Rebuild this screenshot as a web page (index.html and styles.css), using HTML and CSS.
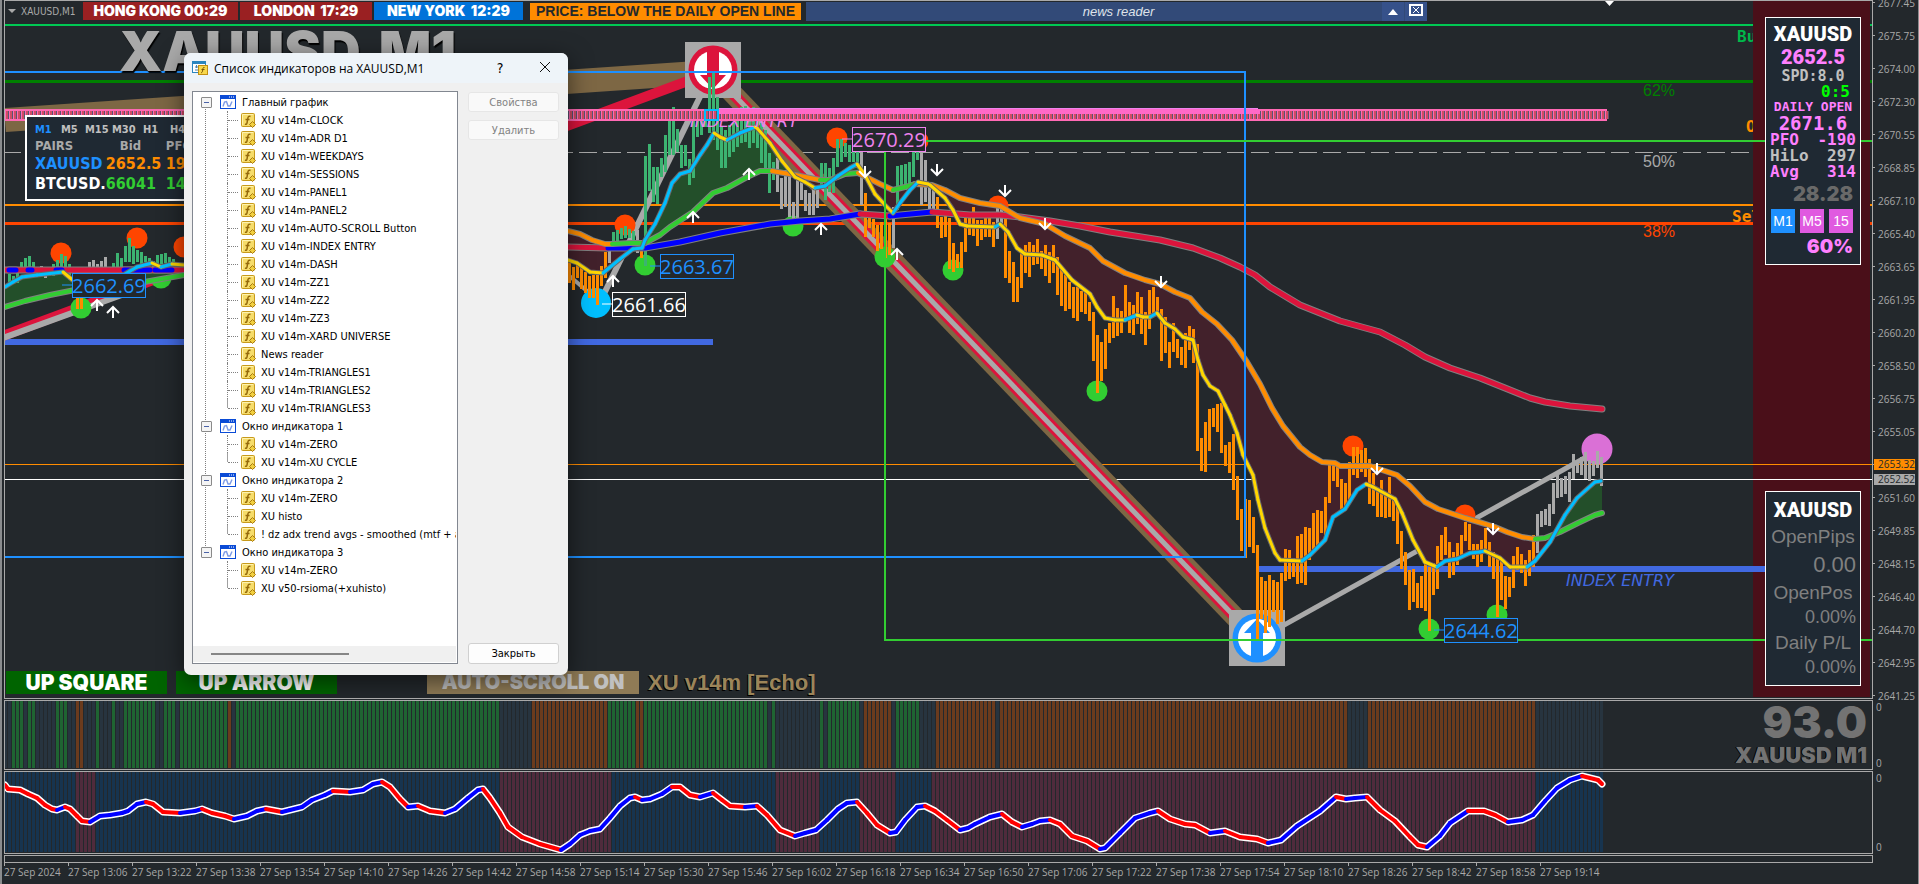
FILE: index.html
```html
<!DOCTYPE html>
<html lang="ru">
<head>
<meta charset="utf-8">
<title>XAUUSD,M1</title>
<meta name="viewport" content="width=device-width, initial-scale=1">
<link rel="stylesheet" href="styles.css">
</head>
<body>

<!-- shared icons -->
<svg class="defs" width="0" height="0">
	<symbol id="ico-chart" viewBox="0 0 16 14">
		<rect x="0.5" y="0.5" width="15" height="13" fill="#fff" stroke="#0a4bd6"/>
		<rect width="16" height="4" fill="#0a4bd6"/>
		<path d="M9 2h1M11 2h1M13 2h1" stroke="#fff"/>
		<path d="M3 11.500L4.500 7L6.500 6.500L8 11L10 11L12 6.500" fill="none" stroke="#7d9be6" stroke-width="1.400"/>
	</symbol>
	<symbol id="ico-func" viewBox="0 0 15 15">
		<rect x="0.500" y="0.500" width="13" height="13" rx="1" fill="#f6dc6a" stroke="#c79a1c"/>
		<path d="M1.500 12V1.500H12" fill="none" stroke="#fff3b0"/>
		<path d="M9.500 3.500C7.500 2.500 7 4 6.700 6L6 10C5.800 11.500 5 11.500 4 11M4.500 6.500H8.500" fill="none" stroke="#94690a" stroke-width="1.500"/>
		<path d="M11.500 8.500L14.500 11.500L11.500 14.500L8.500 11.500Z" fill="#f1cf3f" stroke="#a87a10"/>
	</symbol>
</svg>

<div class="terminal">
	<main class="pane price" id="price">
		<svg class="plot" id="chart"></svg>

		<div class="layer">
			<div class="topbar">
				<span class="symbol"><i class="tri"></i>XAUUSD,M1</span>
				<div class="clocks">
					<span class="clock c_hk">HONG KONG 00:29</span>
					<span class="clock c_ln">LONDON&nbsp; 17:29</span>
					<span class="clock c_ny">NEW YORK&nbsp; 12:29</span>
				</div>
				<span class="warn">PRICE: BELOW THE DAILY OPEN LINE</span>
				<div class="news">
					<em>news reader</em>
					<button type="button" aria-label="Collapse"><svg width="10" height="6"><path d="M0 6L5 0L10 6Z" fill="#fff"/></svg></button>
					<button type="button" aria-label="Close"><svg width="14" height="12"><rect x="1" y="1" width="12" height="10" fill="none" stroke="#fff" stroke-width="2"/><path d="M4 3L10 9M10 3L4 9" stroke="#fff"/></svg></button>
				</div>
			</div>
			<div class="watermark">XAUUSD,M1</div>
			<div class="bottombar">
				<button type="button" class="tag">UP SQUARE</button>
				<button type="button" class="tag">UP ARROW</button>
				<button type="button" class="tag tan">AUTO-SCROLL ON</button>
				<span class="version">XU v14m [Echo]</span>
			</div>
		</div>

		<section class="dash">
			<div class="tfs"><b>M1</b><span>M5</span><span>M15</span><span>M30</span><span>H1</span><span>H4</span></div>
			<table>
				<tr class="head"><th>PAIRS</th><th class="bid">Bid</th><th>PFO</th></tr>
				<tr><td class="blue">XAUUSD</td><td class="orange">2652.5</td><td class="orange">190</td></tr>
				<tr><td class="white">BTCUSD.</td><td class="green">66041</td><td class="green">141</td></tr>
			</table>
		</section>

		<div class="side">
			<section class="box info">
				<h2>XAUUSD</h2>
				<p class="big">2652.5</p>
				<p class="spd">SPD:8.0</p>
				<p class="timer">0:5</p>
				<p class="open">DAILY OPEN</p>
				<p class="openval">2671.6</p>
				<p class="pair"><span>PFO</span><span>-190</span></p>
				<p class="pair grey"><span>HiLo</span><span>297</span></p>
				<p class="pair"><span>Avg</span><span>314</span></p>
				<p class="ratio">28.28</p>
				<div class="tfbtns">
					<button type="button" class="on">M1</button>
					<button type="button">M5</button>
					<button type="button">15</button>
				</div>
				<p class="pct">60%</p>
			</section>
			<section class="box pl">
				<h2>XAUUSD</h2>
				<p>OpenPips</p>
				<p class="num n1">0.00</p>
				<p>OpenPos</p>
				<p class="num">0.00%</p>
				<p>Daily P/L</p>
				<p class="num">0.00%</p>
			</section>
		</div>

		<section class="dialog">
			<header>
				<svg width="16" height="14">
					<rect x="0.5" y="0.5" width="13" height="11" fill="#fff" stroke="#2b86bf"/>
					<rect width="14" height="3" fill="#2b86bf"/>
					<path d="M3 6H6M3 9H6M4.500 4V7" stroke="#4b7fa8"/>
					<rect x="6.500" y="4.500" width="9" height="9" fill="#f8d84c" stroke="#c28f12"/>
					<path d="M12.500 6.500C11 6 11 7 10.700 9C10.500 11 10 12 9 11.500M9.500 8.500H12.500" fill="none" stroke="#7a5605"/>
				</svg>
				<h1>Список индикаторов на XAUUSD,M1</h1>
				<button type="button" class="help">?</button>
				<button type="button" class="x" aria-label="Закрыть окно"><svg width="10" height="10"><path d="M0 0L10 10M10 0L0 10" stroke="#111"/></svg></button>
			</header>
			<div class="content">
				<div class="treebox">
					<ul class="tree" id="tree"></ul>
					<div class="hscroll"><i></i></div>
				</div>
				<div class="actions">
					<button type="button" disabled>Свойства</button>
					<button type="button" disabled>Удалить</button>
					<button type="button" class="close">Закрыть</button>
				</div>
			</div>
		</section>
	</main>
	<aside class="axis" id="axis">
		<span class="mark bid">2653.32</span>
		<span class="mark ask">2652.52</span>
	</aside>

	<section class="pane">
		<svg class="plot" id="cycle"></svg>
		<div class="score"><b>93.0</b><span>XAUUSD M1</span></div>
	</section>
	<aside class="axis sub"><span>0</span><span>0</span></aside>

	<section class="pane">
		<svg class="plot" id="osc"></svg>
	</section>
	<aside class="axis sub"><span>0</span><span>0</span></aside>

	<footer class="dates" id="dates"></footer>
</div>

<script src="chart.js"></script>
</body>
</html>
```
FILE: styles.css
```css
* { box-sizing: border-box; }
html, body { height: 100%; }
body {
	margin: 0;
	background: #23282c;
	color: #a9a9a9;
	font-family: "DejaVu Sans Condensed", "Open Sans", sans-serif;
	font-size: 11px;
	overflow: hidden;
}
h1, h2, p, ul { margin: 0; padding: 0; }
button { font: inherit; border: 0; padding: 0; }
.defs { position: absolute; }

.terminal {
	height: 100vh;
	border-left: 2px solid #8a8c8e;
	border-right: 1px solid #8a8c8e;
	padding-left: 2px;
	display: grid;
	grid-template-columns: minmax(0, 1fr) 45px;
	grid-template-rows: minmax(0, 1fr) 70px 83px 29px;
	row-gap: 1px;
}
.pane {
	position: relative;
	overflow: hidden;
	border: 1px solid #a9a9a9;
}
.plot { position: absolute; left: 0; top: 0; width: 100%; height: 100%; }

/* strip behind the right panels */
.band {
	x: calc(100% - 114px);
	y: 0;
	width: 117px;
	height: 100%;
	fill: #4a0f19;
}

.layer {
	position: relative;
	height: 100%;
	display: flex;
	flex-direction: column;
}
.topbar {
	display: flex;
	align-items: center;
	height: 20px;
}
.symbol { width: 78px; padding-left: 3px; font-size: 10px; white-space: nowrap; }
.tri {
	display: inline-block;
	margin-right: 5px;
	vertical-align: 2px;
	border: 4px solid transparent;
	border-top-color: #a9a9a9;
	border-bottom: 0;
}
.clocks { display: flex; gap: 2px; margin-right: 7px; }
.clock {
	height: 18px;
	text-align: center;
	font: 900 14px/18px Inter, "Liberation Sans", sans-serif;
	color: #fff;
	white-space: nowrap;
}
.c_hk { width: 155px; background: #9a2022; }
.c_ln { width: 132px; background: #9a2022; }
.c_ny { width: 149px; background: #0073d9; }
.warn {
	width: 271px;
	text-align: center;
	background: #ff8c00;
	color: #23282c;
	font: bold 14px/17px "Liberation Sans", sans-serif;
	white-space: nowrap;
	margin-right: 5px;
}
.news {
	display: flex;
	align-items: center;
	width: 621px;
	height: 19px;
	background: #324a78;
}
.news em { flex: 1; padding-left: 50px; text-align: center; font: italic 13px "Liberation Sans", sans-serif; color: #dfe3ea; }
.news button { width: 22px; height: 19px; margin-left: 1px; background: #36518a; line-height: 1; }
.watermark {
	margin: 2px 0 0 114px;
	font: 900 55px/56px Inter, sans-serif;
	color: #a9a9a9;
	text-shadow: 1px 2px 1px #000;
}
.bottombar {
	margin-top: auto;
	padding: 0 0 4px 1px;
	display: flex;
}
.tag {
	width: 161px;
	height: 23px;
	margin-right: 9px;
	background: #006400;
	color: #fff;
	font: 900 21px/23px Inter, sans-serif;
	white-space: nowrap;
}
.tan { width: 212px; margin-left: 81px; background: #8f7b56; color: #c0c0c0; font-size: 20px; }
.version {
	font: bold 22px/23px "Liberation Sans", sans-serif;
	color: #9c8559;
	text-shadow: -1px 1px 0 #000;
}

/* pair table, top left */
.dash {
	position: absolute;
	left: 20px;
	top: 114px;
	width: 210px;
	height: 86px;
	padding: 5px 8px;
	border: 2px solid #fff;
	background: #1f2933;
	font-family: "Liberation Sans Narrow", "DejaVu Sans Condensed", sans-serif;
	font-weight: bold;
}
.tfs { display: grid; grid-template-columns: 26px 24px 27px 31px 27px 30px; font-size: 11px; line-height: 16px; color: #c0c0c0; }
.tfs b, .blue { color: #1e90ff; }
.dash table { border-collapse: collapse; font-size: 16px; line-height: 20px; }
.dash td, .dash th { padding: 0; text-align: left; }
.dash td:nth-child(1) { width: 68px; }
.dash td:nth-child(2) { width: 60px; }
.dash .head { font-size: 13px; line-height: 16px; }
.dash .bid { padding-left: 14px; }
.orange { color: #ff8c00; }
.green { color: #32cd32; }
.white { color: #fff; }

/* right panels */
.side {
	position: absolute;
	right: 11px;
	top: 16px;
	bottom: 12px;
	width: 96px;
	display: flex;
	flex-direction: column;
	justify-content: space-between;
}
.box {
	border: 1px solid #fff;
	background: #1f2933;
	padding: 4px;
	text-align: center;
	white-space: nowrap;
}
.box h2 { font: 900 20px/24px Roboto, sans-serif; color: #fff; }
.info { height: 248px; color: #ff80ff; font-family: "DejaVu Sans Mono", monospace; font-weight: bold; }
.big { font: 900 20px/23px Roboto, sans-serif; }
.spd { font-size: 15px; line-height: 15px; color: #c0c0c0; }
.timer { font-size: 16px; line-height: 16px; color: #0f0; text-align: right; padding-right: 6px; }
.open { font-size: 13px; line-height: 14px; }
.openval { font-size: 19px; line-height: 18px; }
.pair { display: flex; justify-content: space-between; font-size: 16px; line-height: 16px; }
.grey { color: #c0c0c0; }
.ratio { font: 900 20px/28px Inter, sans-serif; color: #696969; text-align: right; padding-right: 3px; }
.tfbtns { display: flex; gap: 5px; padding: 1px 0 0 1px; }
.tfbtns button { width: 24px; height: 24px; background: #e05ae0; color: #fff; font: 14px "Liberation Sans", sans-serif; }
.tfbtns .on { background: #1e90ff; }
.pct { font: 900 19px/28px Inter, sans-serif; text-align: right; padding-right: 3px; }
.pl { height: 195px; padding-top: 6px; font: 19px/29px "Liberation Sans", sans-serif; color: #808080; }
.pl .num { font-size: 18px; line-height: 21px; text-align: right; }
.pl .n1 { font-size: 22px; line-height: 27px; }

/* indicators window */
.dialog {
	position: absolute;
	left: 179px;
	top: 52px;
	width: 384px;
	height: 622px;
	border-radius: 7px;
	background: #f0f0f0;
	box-shadow: 0 6px 24px rgba(0, 0, 0, .55);
	color: #000;
	overflow: hidden;
	display: flex;
	flex-direction: column;
	font-family: "DejaVu Sans Condensed", sans-serif;
}
.dialog header {
	height: 30px;
	padding: 0 18px 0 8px;
	background: #eef4f9;
	display: flex;
	align-items: center;
}
.dialog h1 { flex: 1; margin-left: 6px; font: 12px "Open Sans", sans-serif; white-space: nowrap; }
.dialog header button { background: none; }
.help { font-size: 14px; width: 20px; margin-right: 30px; }
.x { width: 10px; line-height: 1; }
.content { flex: 1; display: flex; gap: 10px; padding: 8px 9px 11px 8px; min-height: 0; }
.treebox {
	width: 266px;
	border: 1px solid #828790;
	background: #fff;
	display: flex;
	flex-direction: column;
	padding: 1px 1px 1px 0;
	overflow: hidden;
}
.tree { flex: 1; list-style: none; overflow: hidden; }
.tree ul { list-style: none; margin-left: 34px; }
.node, .leaf { height: 18px; display: flex; align-items: center; white-space: nowrap; }
.node svg, .leaf svg { flex: none; }
.tree > li { position: relative; }
.tree > li:not(:last-child)::before {
	content: "";
	position: absolute;
	left: 12px;
	top: 9px;
	bottom: -9px;
	border-left: 1px dotted #808080;
}
.node::before {
	content: "";
	position: relative;
	flex: none;
	margin-left: 8px;
	width: 9px;
	height: 9px;
	border: 1px solid #8a8a8a;
	border-radius: 1px;
	background: linear-gradient(#4b63a7, #4b63a7) center / 5px 1px no-repeat, #f4f4f4;
}
.node svg { margin: 0 6px 0 8px; }
.leaf { border-left: 1px dotted #808080; }
.leaf:last-child { border-image: linear-gradient(#a0a0a0 50%, transparent 50%) 1; }
.leaf::before { content: ""; flex: none; width: 10px; margin-right: 3px; border-top: 1px dotted #808080; }
.leaf svg { margin-right: 5px; }
.hscroll { height: 16px; background: #f0f0f0; padding: 7px 0 0 18px; }
.hscroll i { display: block; width: 138px; height: 2px; background: #868686; }
.actions { flex: 1; display: flex; flex-direction: column; gap: 8px; padding-top: 1px; }
.actions button {
	height: 20px;
	border: 1px solid #e6e6e6;
	border-radius: 3px;
	background: #f9f9f9;
	color: #838383;
}
.actions .close { height: 21px; margin-top: auto; border-color: #d0d0d0; background: #fdfdfd; color: #000; }

/* scales */
.axis { position: relative; font: 10px "Open Sans", sans-serif; }
.axis .step { display: flex; align-items: center; gap: 3px; height: 33px; }
.axis .step:first-of-type { margin-top: -14px; }
.axis .step::before { content: ""; width: 2px; border-top: 1px solid #a9a9a9; }
.mark { position: absolute; left: 1px; width: 41px; height: 11px; line-height: 11px; padding-left: 4px; color: #23282c; }
.mark.bid { top: 459px; background: #ff8c00; }
.mark.ask { top: 474px; background: #a9a9a9; }
#axis { height: 100%; min-height: 0; }
.sub { display: flex; flex-direction: column; justify-content: space-between; padding-left: 3px; }

.score {
	position: absolute;
	right: 5px;
	top: 0;
	display: flex;
	flex-direction: column;
	align-items: flex-end;
	color: #737373;
	font-family: Inter, "Liberation Sans", sans-serif;
	font-weight: 900;
}
.score b { font-size: 44px; line-height: 42px; font-weight: 900; }
.score span { font-size: 22px; line-height: 24px; text-shadow: -1px 0 0 #000; }

.dates { border: 1px solid #a9a9a9; border-width: 1px 1px 0; height: 8px; }
.dates ol {
	margin: 6px 0 0 -1px;
	padding: 0;
	border-top: 1px solid #a9a9a9;
	list-style: none;
	display: flex;
}
.dates li { flex: none; width: 64px; font: 10px/12px "Open Sans", sans-serif; white-space: nowrap; }
.dates li::before { content: ""; display: block; width: 1px; height: 3px; background: #a9a9a9; }
```
FILE: chart.js
```js
var NS = 'http://www.w3.org/2000/svg';
var ORANGE = '#ff8c00', GREEN = '#3cb371', GREY = '#a9a9a9', RED = '#dc143c', LIME = '#32cd32', BLUE = '#1e90ff';

function el(parent, name, attrs, text) {
	var n = document.createElementNS(NS, name);
	for (var k in attrs) n.setAttribute(k, attrs[k]);
	if (text) n.textContent = text;
	parent.appendChild(n);
	return n;
}
function layer(id, dy) {
	return el(document.getElementById(id), 'g', { transform: 'translate(-5 ' + -dy + ')' });
}
function line(g, x1, y1, x2, y2, color, w, extra) {
	var a = { x1: x1, y1: y1, x2: x2, y2: y2, stroke: color, 'stroke-width': w };
	for (var k in extra) a[k] = extra[k];
	return el(g, 'line', a);
}
function rect(g, x, y, w, h, fill) {
	return el(g, 'rect', { x: x, y: y, width: w, height: h, fill: fill, 'shape-rendering': 'crispEdges' });
}
function poly(g, pts, color, w) {
	el(g, 'polyline', { points: pts.join(' '), fill: 'none', stroke: color, 'stroke-width': w, 'stroke-linejoin': 'round', 'stroke-linecap': 'round' });
}
function hline(g, y, h, color) {
	rect(g, 5, y, 3000, h, color);
}
function label(x, y, color, text, font, size, extra) {
	var a = { x: x, y: y, fill: color, 'font-family': font, 'font-size': size };
	for (var k in extra) a[k] = extra[k];
	el(g, 'text', a, text);
}
function valueAt(pts, x) {
	for (var i = 0; i + 3 < pts.length; i += 2) {
		if (x >= pts[i] && x <= pts[i + 2]) {
			return pts[i + 1] + (pts[i + 3] - pts[i + 1]) * (x - pts[i]) / (pts[i + 2] - pts[i]);
		}
	}
	return null;
}

/* ---------- price chart ---------- */
var g = layer('chart', 1);

hline(g, 24, 2, '#00c853');
hline(g, 80, 3, '#008000');
line(g, 5, 152.5, 3000, 152.5, GREY, 1, { 'stroke-dasharray': '18 6', 'stroke-dashoffset': 2 });
hline(g, 204, 2, ORANGE);
hline(g, 222, 3, '#ff4500');
label(1737, 42, '#00b84a', 'Buy', 'DejaVu Sans Mono', 16, { 'font-weight': 'bold' });
label(1746, 132, ORANGE, 'Open', 'DejaVu Sans Mono', 16, { 'font-weight': 'bold' });
label(1732, 222, ORANGE, 'Sell', 'DejaVu Sans Mono', 16, { 'font-weight': 'bold' });
el(g, 'rect', { 'class': 'band' });

/* these run over the dark red strip */
hline(g, 464, 1, ORANGE);
hline(g, 479, 1, '#ffffff');
rect(g, 5, 339, 708, 6, '#4169e1');
rect(g, 1256, 566, 509, 6, '#4169e1');

/* zigzags */
line(g, 5, 120, 712, 72, '#7d6744', 24);
line(g, 712, 72, 1257, 640, '#7d6744', 20);
line(g, 0, 337, 712, 72, RED, 10);
line(g, 712, 72, 1257, 640, RED, 11);
line(g, 0, 339, 130, 292, GREY, 6);
line(g, 560, 268, 600, 302, GREY, 4);
line(g, 600, 302, 712, 72, GREY, 6);
line(g, 712, 72, 1257, 640, GREY, 5);
line(g, 1257, 640, 1597, 451, GREY, 5);

function dot(x, y, r, color) { el(g, 'circle', { cx: x, cy: y, r: r, fill: color }); }
[[625, 225], [837, 138], [918, 141], [998, 206], [1125, 284], [1353, 446], [1465, 515], [61, 253], [137, 238], [184, 247]].forEach(function (p) { dot(p[0], p[1], 10.5, '#ff4500'); });
[[645, 265], [793, 226], [885, 257], [953, 270], [1097, 391], [1429, 629], [1497, 615], [57, 283], [81, 308], [161, 278]].forEach(function (p) { dot(p[0], p[1], 10.5, LIME); });
dot(596, 303, 15, '#00bfff');
dot(1597, 449, 15.5, '#da70d6');

/* trend icons */
function signal(x, y, color, flip) {
	var s = el(g, 'g', { transform: 'translate(' + x + ' ' + y + ')' + (flip ? ' rotate(180)' : '') });
	el(s, 'rect', { x: -28, y: -28, width: 56, height: 56, fill: GREY });
	el(s, 'circle', { r: 24.5, fill: color });
	el(s, 'circle', { r: 19, fill: '#fff' });
	el(s, 'path', { d: 'M-6 -20H6V5H13L0 19L-13 5H-6Z', fill: color });
}
signal(713, 70, RED, false);
signal(1257, 638, BLUE, true);

/* moving averages */
var slow = [[RED, [568, 247, 608, 248]], ['#0000ff', [608, 248, 645, 248, 680, 242, 720, 233, 770, 224, 800, 221, 830, 219, 860, 214]],
	[RED, [860, 214, 890, 216]], ['#0000ff', [890, 216, 900, 215, 932, 212]],
	[RED, [932, 212, 970, 215, 1000, 215, 1020, 217, 1050, 221, 1080, 226, 1110, 232, 1160, 240, 1193, 248, 1220, 258, 1240, 267, 1255, 275, 1270, 287, 1300, 305, 1340, 321, 1380, 332, 1405, 345, 1425, 357, 1450, 368, 1480, 378, 1505, 388, 1530, 398, 1545, 402, 1570, 406, 1602, 409]],
	[RED, [5, 270, 184, 270]], ['#0000ff', [9, 270, 16, 270]], ['#0000ff', [28, 270, 32, 270]], ['#0000ff', [56, 270, 62, 270]], ['#0000ff', [124, 270, 150, 270]], ['#0000ff', [155, 270, 172, 270]]];
var mid = [[ORANGE, [568, 231, 580, 234, 592, 240, 605, 244, 612, 244]],
	[LIME, [612, 244, 630, 243, 645, 243, 660, 235, 670, 227, 693, 212, 713, 193, 727, 188, 747, 177, 760, 171, 772, 171]],
	[ORANGE, [772, 171, 795, 175, 820, 180]], [LIME, [820, 180, 830, 180, 845, 174, 858, 173]],
	[ORANGE, [858, 173, 870, 179, 880, 184, 893, 190]], [LIME, [893, 190, 905, 187, 915, 184]],
	[ORANGE, [915, 184, 932, 185, 945, 190, 960, 198, 980, 203, 1000, 206, 1010, 212, 1020, 218, 1045, 224, 1065, 236, 1090, 248, 1103, 261, 1125, 273, 1145, 280, 1160, 284, 1175, 292, 1190, 298, 1202, 312, 1217, 324, 1232, 340, 1247, 362, 1260, 384, 1272, 408, 1283, 426, 1300, 447, 1310, 455, 1322, 462, 1335, 463, 1340, 466, 1370, 466, 1397, 475, 1410, 486, 1425, 502, 1438, 509, 1465, 518, 1482, 523, 1495, 527, 1507, 532, 1522, 537, 1535, 539]],
	[LIME, [1535, 539, 1545, 538, 1560, 532, 1578, 523, 1595, 515, 1602, 513]],
	[LIME, [5, 307, 25, 301, 50, 295, 75, 290, 110, 288, 150, 281, 184, 275]]];
var fast = [[568, 260, 577, 263, 590, 272, 603, 273, 620, 259, 633, 249, 642, 248, 645, 240, 655, 224, 665, 203, 672, 183, 680, 174, 690, 171, 700, 155, 707, 145, 714, 133, 720, 137, 727, 140, 740, 133, 755, 127, 757, 128, 770, 143, 782, 161, 795, 177, 805, 182, 815, 188, 825, 186, 838, 176, 850, 168, 857, 164, 865, 175, 875, 194, 885, 205, 893, 213, 900, 203, 910, 190, 918, 182, 928, 184, 930, 185, 945, 198, 953, 210, 960, 224, 967, 226, 995, 227, 1000, 224, 1008, 232, 1017, 248, 1025, 254, 1042, 255, 1055, 260, 1072, 280, 1090, 294, 1097, 307, 1105, 318, 1115, 320, 1125, 320, 1137, 315, 1143, 317, 1150, 317, 1157, 313, 1165, 323, 1175, 329, 1183, 337, 1193, 340, 1198, 360, 1203, 375, 1210, 386, 1218, 391, 1225, 405, 1230, 415, 1237, 433, 1243, 455, 1253, 475, 1258, 500, 1265, 528, 1275, 553, 1280, 560, 1302, 561, 1310, 555, 1325, 540, 1333, 517, 1345, 509, 1357, 490, 1366, 484, 1373, 487, 1395, 499, 1402, 513, 1413, 540, 1425, 562, 1437, 567, 1445, 561, 1457, 559, 1470, 553, 1480, 552, 1485, 551, 1500, 558, 1510, 567, 1527, 567, 1535, 561, 1550, 542, 1565, 515, 1577, 498, 1595, 482, 1601, 481],
	[5, 287, 13, 282, 22, 277, 37, 275, 63, 272, 75, 282, 100, 284, 120, 277, 130, 271, 137, 267, 152, 263, 161, 267, 172, 264, 184, 265]];

function flat(parts, from, to) {
	var out = [];
	parts.slice(from, to).forEach(function (p) { out = out.concat(p[1]); });
	return out;
}
function cloud(a, b, x1, x2) {
	for (var x = x1; x < x2; x += 2) {
		var t = valueAt(a, x), u = valueAt(b, x);
		if (t === null || u === null) continue;
		rect(g, x, Math.min(t, u), 2, Math.abs(t - u), t < u ? '#234f2a' : '#42212b');
	}
}
cloud(fast[0], flat(mid, 0, 8), 568, 1602);
cloud(fast[1], flat(mid, 8, 9), 5, 184);

/* candles: first x, color, then high/low pairs every 4px */
var candles = [
	[568, ORANGE, 262,283, 267,290, 263,278, 267,289, 272,293, 276,298, 275,298, 273,305, 266,286, 252,278],
	[608, GREY, 250,263], [612, GREEN, 232,248, 230,242, 228,239, 226,238, 229,238, 231,240], [636, GREY, 230,253], [640, ORANGE, 247,258],
	[644, GREEN, 156,266, 144,191, 167,202, 167,204, 158,177, 135,172, 118,155, 107,155, 129,152, 145,168, 145,166, 159,185, 120,178, 117,137, 118,135, 110,127, 77,133, 73,140, 97,150, 127,168, 130,168, 125,157, 123,152, 117,147, 107,143, 106,142, 110,148, 107,143, 117,148, 123,163, 130,172, 153,193, 162,180],
	[776, GREY, 158,192, 178,209, 170,207, 173,217, 202,224, 177,218, 180,200, 190,211, 193,215, 187,215, 188,208],
	[820, GREEN, 163,188, 163,200, 168,192, 158,193, 139,167, 139,162, 143,157, 145,162, 152,162, 152,165],
	[860, GREY, 152,205], [864, ORANGE, 193,237, 213,228, 219,237, 225,251, 222,249, 213,258, 223,255], [892, GREY, 207,248],
	[896, GREEN, 166,210, 165,190, 164,190, 162,187, 152,177, 143,160], [920, GREY, 152,205, 160,202, 182,210, 187,210],
	[936, ORANGE, 197,228, 217,238, 216,237, 218,269, 243,272, 254,268, 242,268, 218,252, 217,235, 207,236, 220,246, 220,240, 218,237, 217,237, 222,247],
	[996, GREY, 207,239, 207,227],
	[1004, ORANGE, 217,278, 251,283, 262,302, 277,302, 252,288, 245,273, 242,277, 245,265, 239,264, 251,269, 245,276, 252,283, 245,273, 257,295, 267,306, 275,311, 282,309, 287,318, 287,321, 291,312, 291,314, 302,321, 312,361, 335,393, 342,381, 329,369, 323,343, 296,338, 308,336, 311,333, 285,320, 302,333, 305,335, 292,324, 297,334, 312,345, 290,329, 287,315, 297,315, 309,361, 317,353, 342,368, 323,352, 339,358, 347,365, 333,368, 326,350, 329,363, 344,451, 438,471, 422,472, 409,451, 408,427, 404,432, 403,453, 445,466, 442,473, 434,490, 476,520, 509,551, 499,558, 500,547, 517,553, 545,639, 577,619, 581,633, 575,627, 580,612, 582,624, 573,622, 549,581, 550,579, 558,577, 536,584, 534,583, 527,585, 528,560, 513,549, 510,547, 511,533, 497,540, 465,503, 463,481, 464,487, 479,509, 483,508, 462,500, 447,475, 447,478, 450,472, 448,477, 459,504, 473,506, 488,517, 480,517, 492,518, 477,517, 498,521, 502,544, 531,569, 552,585, 570,610, 569,602, 583,608, 576,608, 560,611, 567,631, 563,595, 546,589, 535,560, 527,555, 542,578, 552,575, 543,565, 535,555, 522,541, 524,550, 544,559, 544,567, 540,562, 528,553, 542,567, 552,579, 555,617, 558,600, 576,609, 577,597, 556,588, 547,570, 554,573, 560,586, 550,576, 535,567],
	[1536, GREY, 514,553, 511,527, 509,525, 504,526, 483,514, 475,498, 478,497, 476,494, 472,502, 454,479, 463,473, 457,475, 452,479, 460,481, 461,476, 451,468, 457,486],
	[8, GREEN, 274,282, 276,284, 270,283, 262,272, 258,268, 256,270, 262,272],
	[40, GREY, 266,276, 268,278, 268,276], [52, GREEN, 264,276, 260,272, 254,272, 256,268, 264,280], [76, ORANGE, 298,309, 298,309],
	[88, GREY, 262,269, 260,268, 264,269, 261,268], [104, GREY, 257,270], [112, GREEN, 263,270, 253,270, 258,270, 246,262, 238,262, 246,264, 250,262, 252,266, 256,262, 258,264, 261,268, 255,265, 254,264, 253,263, 257,264, 259,265]
];
candles.forEach(function (c) {
	for (var i = 2, x = c[0]; i < c.length; i += 2, x += 4) rect(g, x, c[i], 3, c[i + 1] - c[i], c[1]);
});

function outline(parts, w) {
	parts.forEach(function (p) { poly(g, p[1], '#808080', w + 2); });
	parts.forEach(function (p) { poly(g, p[1], p[0], w); });
}
outline(slow, 5);
outline(mid, 4);
function trend(group, pts, up, down, edge, w) {
	poly(group, pts, edge, w + 2 + (w > 3 ? 1 : 0));
	for (var i = 0; i + 3 < pts.length; i += 2) {
		poly(group, pts.slice(i, i + 4), pts[i + 3] < pts[i + 1] ? up : down, w);
	}
}
fast.forEach(function (p) { trend(g, p, '#00bfff', '#ffd700', '#696969', 3); });

label(690, 127, '#ee82ee', 'INDEX ENTRY', 'DejaVu Sans', 16, { 'font-style': 'italic' });

/* daily open band */
rect(g, 5, 109, 1602, 2, '#ff69b4');
for (var bx = 5; bx < 1606; bx += 4) {
	rect(g, bx, 111, 1, 8, '#ff69b4');
	rect(g, bx + 1, 111, 2, 8, '#d04c64');
	rect(g, bx + 3, 111, 1, 8, '#5a5570');
}
rect(g, 5, 119, 1602, 2, '#ff69b4');
rect(g, 719, 108, 539, 1, '#ee82ee');
rect(g, 719, 109, 541, 5, '#ff69c8');
el(g, 'rect', { x: 705, y: 110, width: 13, height: 10, fill: 'none', stroke: '#00bfff', 'stroke-width': 2 });

/* boxes drawn by hand on the chart */
el(g, 'path', { d: 'M5 72H1245V557H5', fill: 'none', stroke: BLUE, 'stroke-width': 2 });
el(g, 'path', { d: 'M3000 141H885V640H3000', fill: 'none', stroke: LIME, 'stroke-width': 2 });

[[97, 305, 1], [113, 312, 1], [613, 281, 1], [693, 217, 1], [749, 174, 1], [821, 229, 1], [897, 254, 1],
 [865, 172, -1], [937, 170, -1], [1005, 191, -1], [1045, 224, -1], [1161, 282, -1], [1377, 469, -1], [1493, 529, -1]].forEach(function (a) {
	el(g, 'path', { d: 'M0 6V-5M-6 1L0 -5L6 1', fill: 'none', stroke: '#fff', 'stroke-width': 2, transform: 'translate(' + a[0] + ' ' + a[1] + ') scale(1 ' + a[2] + ')' });
});

function tag(x, y, color, text) {
	line(g, x - 10, y + 12, x, y + 12, color, 1);
	el(g, 'rect', { x: x + 0.5, y: y + 0.5, width: 73, height: 24, fill: '#23282c', stroke: color });
	el(g, 'text', { x: x + 37, y: y + 20, 'text-anchor': 'middle', 'font-family': 'Open Sans', 'font-size': 20, fill: color }, text);
}
tag(72, 273, BLUE, '2662.69');
tag(612, 292, '#ffffff', '2661.66');
tag(660, 254, BLUE, '2663.67');
tag(852, 127, '#ee82ee', '2670.29');
tag(1444, 618, BLUE, '2644.62');

label(1643, 96, '#008000', '62%', 'Liberation Sans', 16);
label(1643, 167, GREY, '50%', 'Liberation Sans', 16);
label(1643, 237, '#ff4500', '38%', 'Liberation Sans', 16);
label(1566, 586, '#4169e1', 'INDEX ENTRY', 'DejaVu Sans', 16, { 'font-style': 'italic' });
el(g, 'path', { d: 'M1605 1H1614L1609.5 6Z', fill: '#fff' });

/* ---------- lower panes: [color, count] runs, one bar per minute ---------- */
function histogram(group, y, h, runs) {
	var x = 4;
	runs.forEach(function (r) {
		for (var i = 0; i < r[1]; i++, x += 4) rect(group, x, y, 3, h, r[0]);
	});
}
var N = '#27343f', G = '#1f6432', B = '#6b3b1d', D = '#17344f', M = '#4f2b3c';
var cycle = layer('cycle', 701);
histogram(cycle, 701, 67, [[N, 2], [G, 3], [N, 1], [G, 2], [N, 5], [G, 3], [N, 2], [B, 2], [N, 3], [G, 1], [N, 3], [G, 1], [N, 2], [G, 8], [N, 2], [G, 3], [N, 1],
	[G, 12], [B, 1], [N, 1], [G, 66], [N, 8], [B, 19], [G, 7], [B, 2], [G, 31], [N, 1], [G, 1], [N, 11], [G, 1], [N, 1], [G, 8], [N, 1], [B, 7], [N, 1], [G, 6], [N, 4],
	[B, 15], [N, 1], [B, 87], [N, 5], [B, 42], [N, 17]]);

var osc = layer('osc', 772);
histogram(osc, 772, 80, [[D, 18], [M, 5], [D, 101], [M, 28], [D, 41], [M, 11], [D, 10], [M, 9], [D, 9], [M, 151], [D, 17]]);
trend(osc, [5, 785, 8, 789, 20, 790, 28, 794, 37, 798, 45, 805, 52, 809, 57, 810, 65, 807, 70, 809, 77, 816, 82, 821, 90, 822, 100, 816, 110, 815, 122, 813, 128, 811, 137, 804, 146, 802, 153, 804, 163, 812, 180, 813, 195, 811, 202, 809, 212, 813, 225, 816, 234, 819, 247, 816, 257, 811, 266, 809, 282, 812, 290, 810, 302, 807, 312, 800, 325, 795, 333, 791, 350, 792, 363, 790, 373, 784, 382, 782, 390, 787, 400, 799, 408, 807, 418, 806, 430, 811, 445, 813, 455, 809, 468, 798, 478, 790, 483, 789, 490, 798, 500, 813, 508, 827, 522, 837, 540, 844, 561, 850, 570, 844, 580, 835, 590, 831, 600, 829, 610, 818, 620, 806, 630, 798, 635, 797, 642, 800, 650, 799, 662, 794, 672, 787, 680, 787, 690, 795, 700, 797, 713, 793, 722, 800, 730, 806, 745, 807, 757, 806, 767, 815, 780, 830, 795, 836, 805, 833, 816, 830, 827, 820, 838, 809, 847, 803, 857, 802, 867, 813, 877, 825, 890, 833, 896, 832, 905, 820, 917, 807, 925, 806, 935, 811, 947, 820, 960, 830, 968, 828, 975, 824, 990, 817, 1002, 814, 1012, 822, 1022, 827, 1032, 824, 1040, 821, 1050, 820, 1060, 824, 1072, 836, 1087, 841, 1100, 849, 1105, 848, 1120, 833, 1135, 818, 1150, 813, 1158, 811, 1170, 819, 1185, 824, 1195, 825, 1210, 833, 1225, 831, 1240, 837, 1257, 839, 1268, 843, 1281, 840, 1297, 826, 1320, 811, 1336, 797, 1346, 799, 1355, 798, 1367, 797, 1380, 810, 1395, 821, 1410, 837, 1418, 845, 1427, 847, 1440, 836, 1450, 823, 1468, 811, 1484, 811, 1495, 815, 1508, 822, 1522, 820, 1533, 815, 1545, 801, 1557, 788, 1570, 780, 1582, 776, 1598, 780, 1602, 784],
	'#0000ff', '#ff0000', '#fff', 4);

/* ---------- scales ---------- */
var axis = document.getElementById('axis');
['2677.45', '2675.75', '2674.00', '2672.30', '2670.55', '2668.85', '2667.10', '2665.40', '2663.65', '2661.95', '2660.20', '2658.50', '2656.75', '2655.05', '',
 '2651.60', '2649.85', '2648.15', '2646.40', '2644.70', '2642.95', '2641.25'].forEach(function (p) {
	var s = document.createElement('div');
	s.className = 'step';
	s.textContent = p;
	axis.appendChild(s);
});

var ol = document.createElement('ol');
for (var t = 0; t < 25; t++) {
	var m = 12 * 60 + 50 + t * 16;
	var li = document.createElement('li');
	li.append('27 Sep ' + (t ? Math.floor(m / 60) + ':' + ('0' + m % 60).slice(-2) : '2024'));
	ol.appendChild(li);
}
document.getElementById('dates').appendChild(ol);

/* ---------- indicator tree ---------- */
var groups = {
	'Главный график': ['XU v14m-CLOCK', 'XU v14m-ADR D1', 'XU v14m-WEEKDAYS', 'XU v14m-SESSIONS', 'XU v14m-PANEL1', 'XU v14m-PANEL2', 'XU v14m-AUTO-SCROLL Button',
		'XU v14m-INDEX ENTRY', 'XU v14m-DASH', 'XU v14m-ZZ1', 'XU v14m-ZZ2', 'XU v14m-ZZ3', 'XU v14m-XARD UNIVERSE', 'News reader',
		'XU v14m-TRIANGLES1', 'XU v14m-TRIANGLES2', 'XU v14m-TRIANGLES3'],
	'Окно индикатора 1': ['XU v14m-ZERO', 'XU v14m-XU CYCLE'],
	'Окно индикатора 2': ['XU v14m-ZERO', 'XU histo', '! dz adx trend avgs - smoothed (mtf + al'],
	'Окно индикатора 3': ['XU v14m-ZERO', 'XU v50-rsioma(+xuhisto)']
};
var html = '';
for (var name in groups) {
	html += '<li><div class="node"><svg width="16" height="14"><use href="#ico-chart"/></svg>' + name + '</div><ul>';
	groups[name].forEach(function (s) {
		html += '<li class="leaf"><svg width="15" height="15"><use href="#ico-func"/></svg>' + s + '</li>';
	});
	html += '</ul></li>';
}
document.getElementById('tree').innerHTML = html;
```
